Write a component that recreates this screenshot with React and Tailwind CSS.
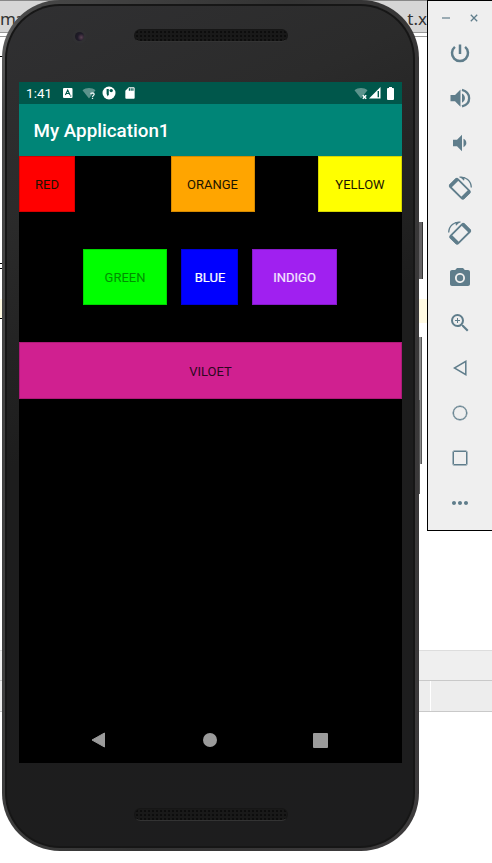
import React from "react";
import {
  MdCameraAlt,
  MdZoomIn,
  MdMoreHoriz,
  MdSdCard,
} from "react-icons/md";

function PowerIcon() {
  return (
    <svg width="24" height="24" viewBox="0 0 24 24" fill="none" stroke="currentColor" strokeWidth="2.500">
      <path d="M12 3.500V13M6.900 5.900A8 8 0 1 0 17.100 5.900" />
    </svg>
  );
}

function VolumeIcon({ loud }) {
  return (
    <svg width="24" height="24" viewBox="0 0 24 24" fill="currentColor">
      {loud ? (
        <>
          <path d="M2.500 9V15.200H7L12.500 20.700V3.500L7 9Z" />
          <path d="M14 7.500V16.700C17.900 14.900 17.900 9.300 14 7.500Z" />
          <path d="M14 3.800C23.500 6.500 23.500 17.800 14 20.400" fill="none" stroke="currentColor" strokeWidth="2.300" />
        </>
      ) : (
        <>
          <path d="M5 8.800V15.200H9L14 20.200V3.800L9 8.800Z" />
          <path d="M15.500 7.800V16.200C19.300 14.500 19.300 9.500 15.500 7.800Z" />
        </>
      )}
    </svg>
  );
}

function RotateIcon({ mirrored }) {
  return (
    <svg width="26" height="26" viewBox="0 0 26 26" className={mirrored ? "-scale-x-100" : ""}>
      <g transform="translate(12.8 13.8) rotate(45)" fill="none" stroke="currentColor">
        <rect x="-9.500" y="-5.400" width="19" height="10.800" rx="1.200" strokeWidth="1.800" />
        <path d="M-8.500 -5V5M8.500 -5V5" strokeWidth="3.600" />
      </g>
      <path d="M12.500 2.200C18.500 1.200 24.200 5.700 24.300 12.500" fill="none" stroke="currentColor" strokeWidth="1.300" />
      <path d="M13 2L17.800 2L17 5.800Z" fill="currentColor" />
    </svg>
  );
}

function Speaker() {
  return (
    <div className="h-[13px] w-[154px] rounded-full border border-[#161616] border-b-[#333] bg-[#191919] bg-[radial-gradient(circle,#0a0a0a_0.6px,transparent_1.1px)] bg-[length:4px_4px]" />
  );
}

function WifiOff({ mark }) {
  return (
    <svg width="15" height="13" viewBox="0 0 15 13">
      <path d="M0.500 3.300C4 .3 10 .3 13.500 3.300L7 11.500Z" fill="#fff" opacity=".36" />
      {mark === "?" ? (
        <path d="M8.600 7.200C8.700 5.600 12.200 5.500 12.200 7.300C12.200 8.500 10.500 8.500 10.500 10M10.500 10.800V12" fill="none" stroke="#e5f0ee" strokeWidth="1.300" />
      ) : (
        <path d="M8.800 8.300L12.200 11.700M12.200 8.300L8.800 11.700" stroke="#fff" strokeWidth="1.500" />
      )}
    </svg>
  );
}

function StatusBar() {
  return (
    <div className="flex h-[22px] shrink-0 items-center bg-[#00574b] pr-[8px] pl-[7px] text-white">
      <span className="w-[37px] pt-px text-[13.4px] leading-none tracking-[0.1px]">1:41</span>
      <svg width="10" height="10" viewBox="0 0 10 10">
        <rect width="9.500" height="10" rx="1" fill="#fff" />
        <path d="M2.400 7L4.700 2L7 7M3.200 5.500H6.200M7 8H8.400" fill="none" stroke="#00574b" strokeWidth="1.100" />
      </svg>
      <span className="ml-[9px]"><WifiOff mark="?" /></span>
      <svg width="14" height="14" viewBox="0 0 14 14" className="ml-[5px]">
        <circle cx="7" cy="7" r="6.500" fill="#fff" />
        <path d="M4.600 3H6.800V8.300L5.800 10.500L4.600 8Z" fill="#00574b" />
        <circle cx="9.200" cy="4.600" r="1.700" fill="#00574b" />
      </svg>
      <MdSdCard size={14} className="ml-[7px]" />
      <span className="ml-auto"><WifiOff mark="x" /></span>
      <svg width="12" height="12" viewBox="0 0 12 12">
        <path d="M0 11.500L11.500 0V11.500Z" fill="#fff" />
        <path d="M9.300 4V10.300" stroke="#00574b" strokeWidth="1.400" />
      </svg>
      <svg width="7" height="13" viewBox="0 0 7 13" className="ml-[6px]">
        <path d="M2 0H5V1H6.200Q7 1 7 2V12Q7 13 6 13H1Q0 13 0 12V2Q0 1 1 1H2Z" fill="#fff" />
      </svg>
    </div>
  );
}

function ColorBlock({ className, children }) {
  return (
    <div className={`flex items-center justify-center text-[13px] leading-none shadow-[inset_0_0_0_1px_rgba(0,0,0,0.16)] ${className}`}>
      {children}
    </div>
  );
}

function Screen() {
  return (
    <div className="flex h-[681px] w-[383px] flex-col bg-black font-['Roboto',sans-serif]">
      <StatusBar />
      <div className="flex h-[52px] shrink-0 items-center bg-[#008577] pt-[3px] pl-[14.500px] text-[18.800px] font-medium text-white">
        My Application1
      </div>
      <div className="flex justify-between text-[#1b1400]">
        <ColorBlock className="h-[56px] w-[56px] bg-[#ff0000]">RED</ColorBlock>
        <ColorBlock className="mr-[-20px] ml-[12px] h-[56px] w-[84px] bg-[#ffa500]">ORANGE</ColorBlock>
        <ColorBlock className="h-[56px] w-[84px] bg-[#ffff00]">YELLOW</ColorBlock>
      </div>
      <div className="mt-[37px] ml-[64px] flex">
        <ColorBlock className="h-[56px] w-[84px] bg-[#00ff00] text-[#008f00]">GREEN</ColorBlock>
        <ColorBlock className="ml-[14px] h-[56px] w-[57px] bg-[#0000ff] pl-px text-white [-webkit-text-stroke:0.2px_white]">BLUE</ColorBlock>
        <ColorBlock className="ml-[14px] h-[56px] w-[85px] bg-[#a020f0] text-[#f4e8ff] [-webkit-text-stroke:0.2px_#f4e8ff]">INDIGO</ColorBlock>
      </div>
      <ColorBlock className="mt-[37px] h-[57px] bg-[#d02090] pt-px text-[#2c0820]">VILOET</ColorBlock>
      <div className="mt-auto flex h-[46px] items-center justify-between pr-[74px] pl-[72px]">
        <svg width="15" height="16" viewBox="0 0 15 16">
          <path d="M13.500 1V15L1 8Z" fill="#9b9b9b" stroke="#9b9b9b" strokeLinejoin="round" />
        </svg>
        <div className="ml-px size-[14px] rounded-full bg-[#9b9b9b]" />
        <div className="size-[15px] rounded-[1px] bg-[#9b9b9b]" />
      </div>
    </div>
  );
}

function Phone() {
  return (
    <div className="absolute top-0 left-[2px] h-[851px] w-[417px] rounded-[58px] bg-[linear-gradient(100deg,#6a6a6a,#484848_4%,#333_50%,#3d3b3c)] pt-[4px] pr-[4px] pb-[3px] pl-[3px]">
      <div className="h-full rounded-[55px] bg-[#161616] px-[2px] pt-[2px] pb-[2px]">
        <div className="flex h-full flex-col items-center rounded-[53px] bg-[linear-gradient(155deg,#303032,#2b2b2b_20%,#1d1d1d_45%,#1d1d1e)]">
          <div className="flex h-[76px] w-full shrink-0 pt-[23px] pl-[65px]">
            <div className="mr-[47px] flex size-[15px] items-center justify-center rounded-full bg-[#303032]">
              <div className="size-[9px] rounded-full bg-[radial-gradient(circle_at_70%_60%,#5b4153,#201b29_45%,#17171c)]" />
            </div>
            <Speaker />
          </div>
          <div className="ml-px"><Screen /></div>
          <div className="mt-[45px] pl-px"><Speaker /></div>
        </div>
      </div>
    </div>
  );
}

function Tool({ children }) {
  return <div className="flex h-[45px] shrink-0 items-center justify-center">{children}</div>;
}

function Toolbar() {
  return (
    <div className="absolute top-0 right-0 flex h-[531px] w-[65px] flex-col border-y border-l border-black bg-[#efefef] text-[#5f7d8b]">
      <div className="flex h-[29px] shrink-0 items-center justify-between pt-[5px] pr-[14px] pl-[14px]">
        <div className="h-[1.500px] w-[8px] bg-[#9aabb3]" />
        <svg width="8" height="8" viewBox="0 0 8 8">
          <path d="M.8.8L7.200 7.200M7.200.8L.8 7.200" stroke="currentColor" strokeWidth="1.300" />
        </svg>
      </div>
      <Tool><PowerIcon /></Tool>
      <Tool><VolumeIcon loud /></Tool>
      <Tool><VolumeIcon /></Tool>
      <Tool><RotateIcon /></Tool>
      <Tool><RotateIcon mirrored /></Tool>
      <Tool><MdCameraAlt size={24} /></Tool>
      <Tool><MdZoomIn size={24} /></Tool>
      <Tool>
        <svg width="14" height="16" viewBox="0 0 14 16">
          <path d="M12.800 1.300V14.700L1.300 8Z" fill="none" stroke="currentColor" strokeWidth="1.500" />
        </svg>
      </Tool>
      <Tool><div className="size-[14px] rounded-full border-[1.500px] border-current shadow-[0_0_0_0.500px_#5f7d8b]" /></Tool>
      <Tool><div className="size-[14px] rounded-[1px] border-[1.500px] border-current shadow-[0_0_0_0.500px_#5f7d8b]" /></Tool>
      <Tool><MdMoreHoriz size={24} /></Tool>
    </div>
  );
}

function EditorBackdrop() {
  return (
    <div className="flex h-full flex-col bg-white font-['Noto_Sans',sans-serif] text-[17px] text-[#333]">
      <div className="flex h-[33px] shrink-0 items-center justify-between border-t border-b border-t-[#888] border-b-[#999] bg-[#d6d6d6] pt-[5px] pr-[65px]">
        <span className="tracking-[-1px]">ma</span>
        <span>t.x</span>
      </div>
      <div className="mt-[3px] h-px shrink-0 bg-[#999]" />
      <div className="mt-[19px] h-px w-[4px] shrink-0 bg-black" />
      <div className="mt-[206px] h-[6px] w-[4px] shrink-0 border-y border-black" />
      <div className="mt-[30px] flex h-[24px] shrink-0 justify-between">
        <div className="h-[20px] w-[4px] border-b border-black bg-[#fffae3]" />
        <div className="w-[80px] bg-[#fffae3]" />
      </div>
      <div className="mt-[327px] h-[30px] shrink-0 border-t border-[#ddd] bg-[#efefef]" />
      <div className="flex h-[32px] shrink-0 border-y border-[#c9c9c9] bg-[#ededed]">
        <div className="w-[431px] border-r border-white" />
      </div>
    </div>
  );
}

export default function App() {
  return (
    <div className="relative h-[863px] w-[492px] overflow-hidden">
      <EditorBackdrop />
      <div className="absolute top-[222px] left-[417px] h-[57px] w-[6px] border-r border-[#333] bg-[#656365]" />
      <div className="absolute top-[337px] left-[417px] h-[127px] w-[5px] border-r border-[#555] bg-[#8a8a8a]" />
      <div className="absolute top-[400px] left-[417px] h-[94px] w-[3px] bg-[#555]" />
      <Phone />
      <Toolbar />
    </div>
  );
}
